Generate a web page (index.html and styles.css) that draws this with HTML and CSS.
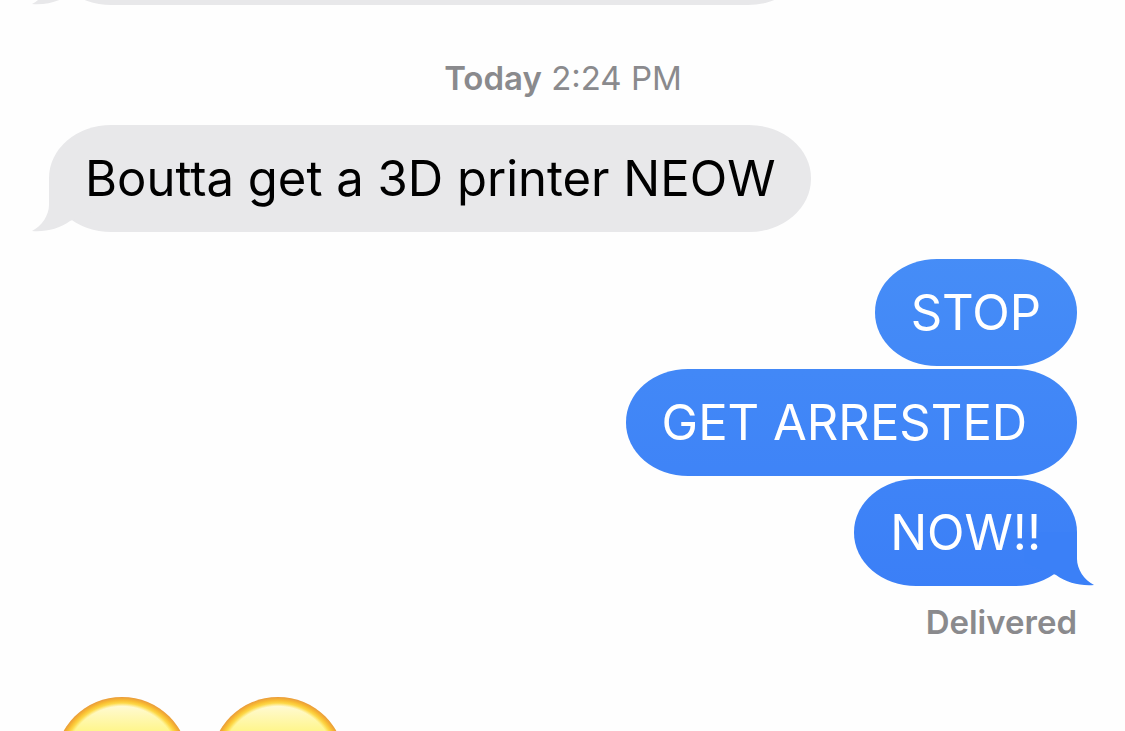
FILE: index.html
```html
<!DOCTYPE html>
<html lang="en">
<head>
  <meta charset="UTF-8">
  <meta name="viewport" content="width=device-width, initial-scale=1.0">
  <title>Messages</title>
  <link rel="stylesheet" href="styles.css">
</head>
<body>
  <main class="thread">
    <div class="bubble received previous">
      <svg class="tail" viewBox="0 0 70 54" aria-hidden="true">
        <path d="M17 0 V27 C17 37 10 48 0 53 C14 54 27 51 38 43 L70 30 V0 Z"/>
      </svg>
    </div>

    <p class="date"><b>Today</b> 2:24 PM</p>

    <div class="bubble received">
      <svg class="tail" viewBox="0 0 70 54" aria-hidden="true">
        <path d="M17 0 V27 C17 37 10 48 0 53 C14 54 27 51 38 43 L70 30 V0 Z"/>
      </svg>
      <span class="text">Boutta get a 3D printer NEOW</span>
    </div>

    <div class="group">
      <div class="bubble sent">STOP</div>
      <div class="bubble sent">GET ARRESTED&nbsp;</div>
      <div class="bubble sent">
        <svg class="tail" viewBox="0 0 70 54" aria-hidden="true">
          <path d="M53 0 V27 C53 37 60 48 70 53 C56 54 43 51 32 43 L0 30 V0 Z"/>
        </svg>
        <span class="text">NOW!!</span>
      </div>
    </div>

    <p class="status">Delivered</p>

    <div class="emojis">
      <svg class="emoji" viewBox="0 0 134 134" aria-hidden="true">
        <defs>
          <linearGradient id="face" x1="0" y1="0" x2="0" y2="1">
            <stop offset="0.05" stop-color="#fffad8"/>
            <stop offset="0.25" stop-color="#fff68e"/>
            <stop offset="1" stop-color="#ffe04a"/>
          </linearGradient>
          <radialGradient id="rim" cx="67" cy="67" r="67" gradientUnits="userSpaceOnUse">
            <stop offset="0.86" stop-color="#fddc4a" stop-opacity="0"/>
            <stop offset="0.91" stop-color="#fdd848"/>
            <stop offset="0.95" stop-color="#f9bd31"/>
            <stop offset="1" stop-color="#e99a3c"/>
          </radialGradient>
        </defs>
        <circle cx="67" cy="67" r="67" fill="url(#face)"/>
        <circle cx="67" cy="67" r="67" fill="url(#rim)"/>
      </svg>
      <svg class="emoji" viewBox="0 0 134 134" aria-hidden="true">
        <circle cx="67" cy="67" r="67" fill="url(#face)"/>
        <circle cx="67" cy="67" r="67" fill="url(#rim)"/>
      </svg>
    </div>
  </main>
</body>
</html>
```

FILE: styles.css
```css
* {
  box-sizing: border-box;
}

body {
  margin: 0;
  height: 100vh;
  overflow: hidden;
  background: #fefefe;
  font-family: Inter, "Liberation Sans", sans-serif;
}

p {
  margin: 0;
}

.thread {
  display: flex;
  flex-direction: column;
  padding: 0 48px 0 49px;
}

.bubble {
  position: relative;
  padding: 23px 36px;
  min-height: 107px;
  border-radius: 62px / 53px;
  font-size: 49px;
  line-height: 61px;
  white-space: nowrap;
}

.received {
  align-self: flex-start;
  background: #e8e8ea;
  color: #000;
}

.sent {
  background: linear-gradient(#468df7 250px, #3b7ff7 590px) fixed;
  color: #fff;
}

/* the older message, scrolled almost out of view */
.previous {
  width: 74%;
  margin-top: -102px;
}

.text {
  position: relative;
}

.tail {
  position: absolute;
  bottom: 0;
  width: 70px;
  height: 54px;
}

.received .tail {
  left: -17px;
  fill: #e8e8ea;
}

.sent .tail {
  right: -17px;
  fill: #3b80f7;
}

.date,
.status {
  color: #8a8a8d;
  font-size: 33px;
  line-height: 40px;
}

.date {
  margin: 53px 0 27px;
  text-align: center;
}

.date b {
  font-weight: 600;
}

.group {
  display: flex;
  flex-direction: column;
  align-items: flex-end;
  gap: 3px;
  margin-top: 27px;
}

.status {
  margin-top: 16px;
  font-weight: 600;
  text-align: right;
}

.emojis {
  display: flex;
  gap: 22px;
  margin-top: 55px;
  padding-left: 6px;
}

.emoji {
  width: 134px;
  height: 134px;
}
```
